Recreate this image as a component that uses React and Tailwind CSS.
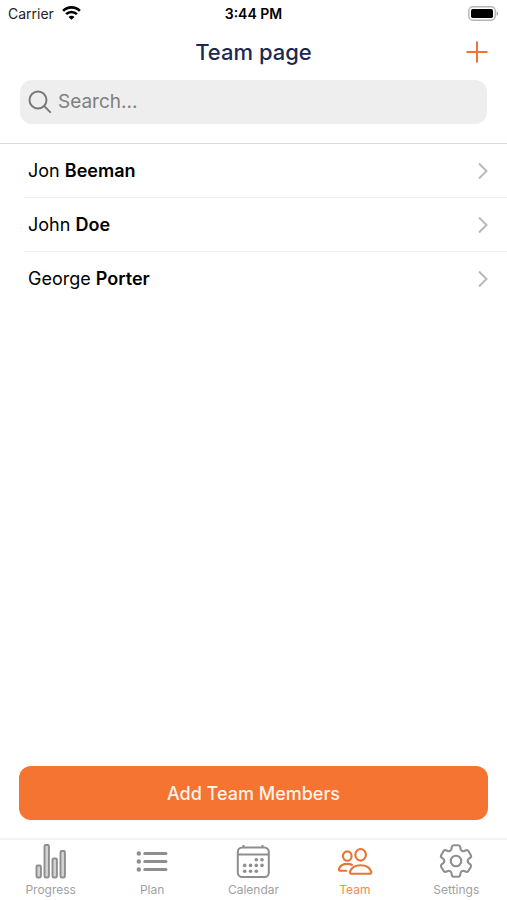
import React, { useState } from 'react';
import { HiOutlineCog6Tooth } from 'react-icons/hi2';

const members = [
  { id: 1, first: 'Jon', last: 'Beeman' },
  { id: 2, first: 'John', last: 'Doe' },
  { id: 3, first: 'George', last: 'Porter' },
];

function WifiIcon() {
  return (
    <svg width="19" height="14" viewBox="0 0 19 14" fill="none" stroke="#000" strokeWidth="2.6" aria-hidden="true">
      <path d="M1.1 4.9a11.8 11.8 0 0 1 16.8 0" />
      <path d="M4.1 8.2a7.6 7.6 0 0 1 10.8 0" />
      <path d="M9.5 13.8 6.5 10.9a4.2 4.2 0 0 1 6 0z" fill="#000" stroke="none" />
    </svg>
  );
}

function BatteryIcon() {
  return (
    <svg width="31" height="15" viewBox="0 0 31 15" fill="none" aria-hidden="true">
      <rect x="0.8" y="0.8" width="26.4" height="13.4" rx="4" stroke="#b4b4b4" strokeWidth="1.4" />
      <rect x="3" y="3" width="22" height="9" rx="1.8" fill="#000" />
      <path d="M28.6 5.2c2 .8 2 3.8 0 4.6z" fill="#a8a8a8" />
    </svg>
  );
}

function ProgressIcon() {
  return (
    <svg width="34" height="36" viewBox="0 0 34 36" fill="#d4d4d4" stroke="#8e8e8e" strokeWidth="1.9" aria-hidden="true">
      <rect x="2.5" y="22.5" width="4.4" height="12" rx="1.2" />
      <rect x="10.5" y="2" width="4.4" height="32.5" rx="1.2" />
      <rect x="18.5" y="15.5" width="4.4" height="19" rx="1.2" />
      <rect x="26.5" y="8" width="4.4" height="26.5" rx="1.2" />
    </svg>
  );
}

function PlanIcon() {
  return (
    <svg width="32" height="36" viewBox="0 0 32 36" fill="#8e8e8e" stroke="#8e8e8e" aria-hidden="true">
      <g stroke="none">
        <circle cx="2.8" cy="10.5" r="2.2" />
        <circle cx="2.8" cy="18.5" r="2.2" />
        <circle cx="2.8" cy="26.5" r="2.2" />
      </g>
      <path d="M8.8 10.5H30M8.8 18.5H30M8.8 26.5H30" strokeWidth="3" strokeLinecap="round" />
    </svg>
  );
}

function CalendarIcon() {
  return (
    <svg width="34" height="36" viewBox="0 0 34 36" fill="none" stroke="#8e8e8e" strokeWidth="2" aria-hidden="true">
      <rect x="1.8" y="4.5" width="31" height="29.5" rx="4.5" />
      <path d="M2 11.5h30M7.5 2v3M26.5 2v3" />
      <g fill="#8e8e8e" stroke="none">
        <circle cx="20.3" cy="16.7" r="1.8" />
        <circle cx="26" cy="16.7" r="1.8" />
        <circle cx="8.7" cy="22.4" r="1.8" />
        <circle cx="14.5" cy="22.4" r="1.8" />
        <circle cx="20.3" cy="22.4" r="1.8" />
        <circle cx="26" cy="22.4" r="1.8" />
        <circle cx="8.7" cy="28.2" r="1.8" />
        <circle cx="14.5" cy="28.2" r="1.8" />
        <circle cx="20.3" cy="28.2" r="1.8" />
      </g>
    </svg>
  );
}

function TeamIcon() {
  return (
    <svg width="36" height="36" viewBox="0 0 36 36" fill="none" stroke="#e87332" strokeWidth="2.1" strokeLinecap="round" strokeLinejoin="round" aria-hidden="true">
      <ellipse cx="10.3" cy="13.1" rx="4.3" ry="4.7" />
      <ellipse cx="23.6" cy="11.8" rx="5.3" ry="5.8" />
      <path d="M15 30.8c-1.700 0-2.400-.9-2-2.200 1.300-3.700 5.400-6.300 10.600-6.300s9.300 2.600 10.600 6.300c.4 1.300-.3 2.200-2 2.200z" />
      <path d="M9.2 27.8H3.600c-1.400 0-1.900-.8-1.600-1.900 1-2.900 4.300-5 8.400-5 1.700 0 3.200.3 4.500.9" />
    </svg>
  );
}

const tabs = [
  { name: 'Progress', icon: <ProgressIcon /> },
  { name: 'Plan', icon: <PlanIcon /> },
  { name: 'Calendar', icon: <CalendarIcon /> },
  { name: 'Team', icon: <TeamIcon />, active: true },
  { name: 'Settings', icon: <HiOutlineCog6Tooth size={42} strokeWidth={1.2} className="shrink-0 text-[#8e8e8e]" /> },
];

function App() {
  const [search, setSearch] = useState('');

  const filtered = members.filter((member) =>
    `${member.first} ${member.last}`.toLowerCase().includes(search.toLowerCase())
  );

  return (
    <div className="flex min-h-screen flex-col bg-white font-[Inter,sans-serif] text-black">
      <div className="grid h-[26px] grid-cols-3 items-center px-2 text-[14px]">
        <div className="flex items-center gap-2 text-[#222]">
          <span>Carrier</span>
          <WifiIcon />
        </div>
        <span className="text-center font-semibold">3:44 PM</span>
        <div className="flex justify-end">
          <BatteryIcon />
        </div>
      </div>

      <header className="grid h-[50px] grid-cols-[1fr_auto_1fr] items-center px-[19px] pt-0.5">
        <h1 className="col-start-2 text-[22px] font-medium text-[#1c2951]">Team page</h1>
        <button type="button" aria-label="Add member" className="justify-self-end">
          <svg width="22" height="22" viewBox="0 0 22 22" stroke="#f37335" strokeWidth="2" aria-hidden="true">
            <path d="M11 0.5v21M0.5 11h21" />
          </svg>
        </button>
      </header>

      <div className="border-b border-[#dadada] px-5 pt-1 pb-[19px]">
        <div className="flex h-11 items-center gap-1.5 rounded-xl bg-[#eee] px-2">
          <svg width="24" height="24" viewBox="0 0 24 24" fill="none" stroke="#777" strokeWidth="1.9" strokeLinecap="round" aria-hidden="true">
            <circle cx="10" cy="10" r="8.5" />
            <path d="m16.2 16.2 6 6" />
          </svg>
          <input
            type="text"
            aria-label="Search"
            value={search}
            onChange={(e) => setSearch(e.target.value)}
            placeholder="Search..."
            className="min-w-0 flex-1 bg-transparent text-[19px] outline-none placeholder:text-[#808080]"
          />
        </div>
      </div>

      <ul className="flex-1 pl-6">
        {filtered.map((member) => (
          <li key={member.id} className="border-b border-[#ededed] last:border-b-0">
            <a href="#" className="flex h-[53px] items-center justify-between pl-1 pr-[18px] text-[18px]">
              <span>
                {member.first} <span className="font-semibold">{member.last}</span>
              </span>
              <svg width="12" height="18" viewBox="0 0 12 18" fill="none" stroke="#b9b9b9" strokeWidth="2" aria-hidden="true">
                <path d="m2 1.5 7.5 7.5L2 16.5" />
              </svg>
            </a>
          </li>
        ))}
      </ul>

      <div className="px-[19px] pb-[18px]">
        <button type="button" className="h-[54px] w-full rounded-xl bg-[#f57432] text-[18px] font-medium text-[#fff3ea]">
          Add Team Members
        </button>
      </div>

      <nav className="grid h-[62px] grid-cols-5 border-t-2 border-[#f3f3f3]">
        {tabs.map((tab) => (
          <a
            key={tab.name}
            href="#"
            aria-current={tab.active ? 'page' : undefined}
            className={`flex flex-col items-center gap-0.5 pt-[3px] text-[12px] ${tab.active ? 'text-[#f08a57]' : 'text-[#a0a0a0]'}`}
          >
            <span className="flex h-9 items-center">{tab.icon}</span>
            <span>{tab.name}</span>
          </a>
        ))}
      </nav>
    </div>
  );
}

export default App;
